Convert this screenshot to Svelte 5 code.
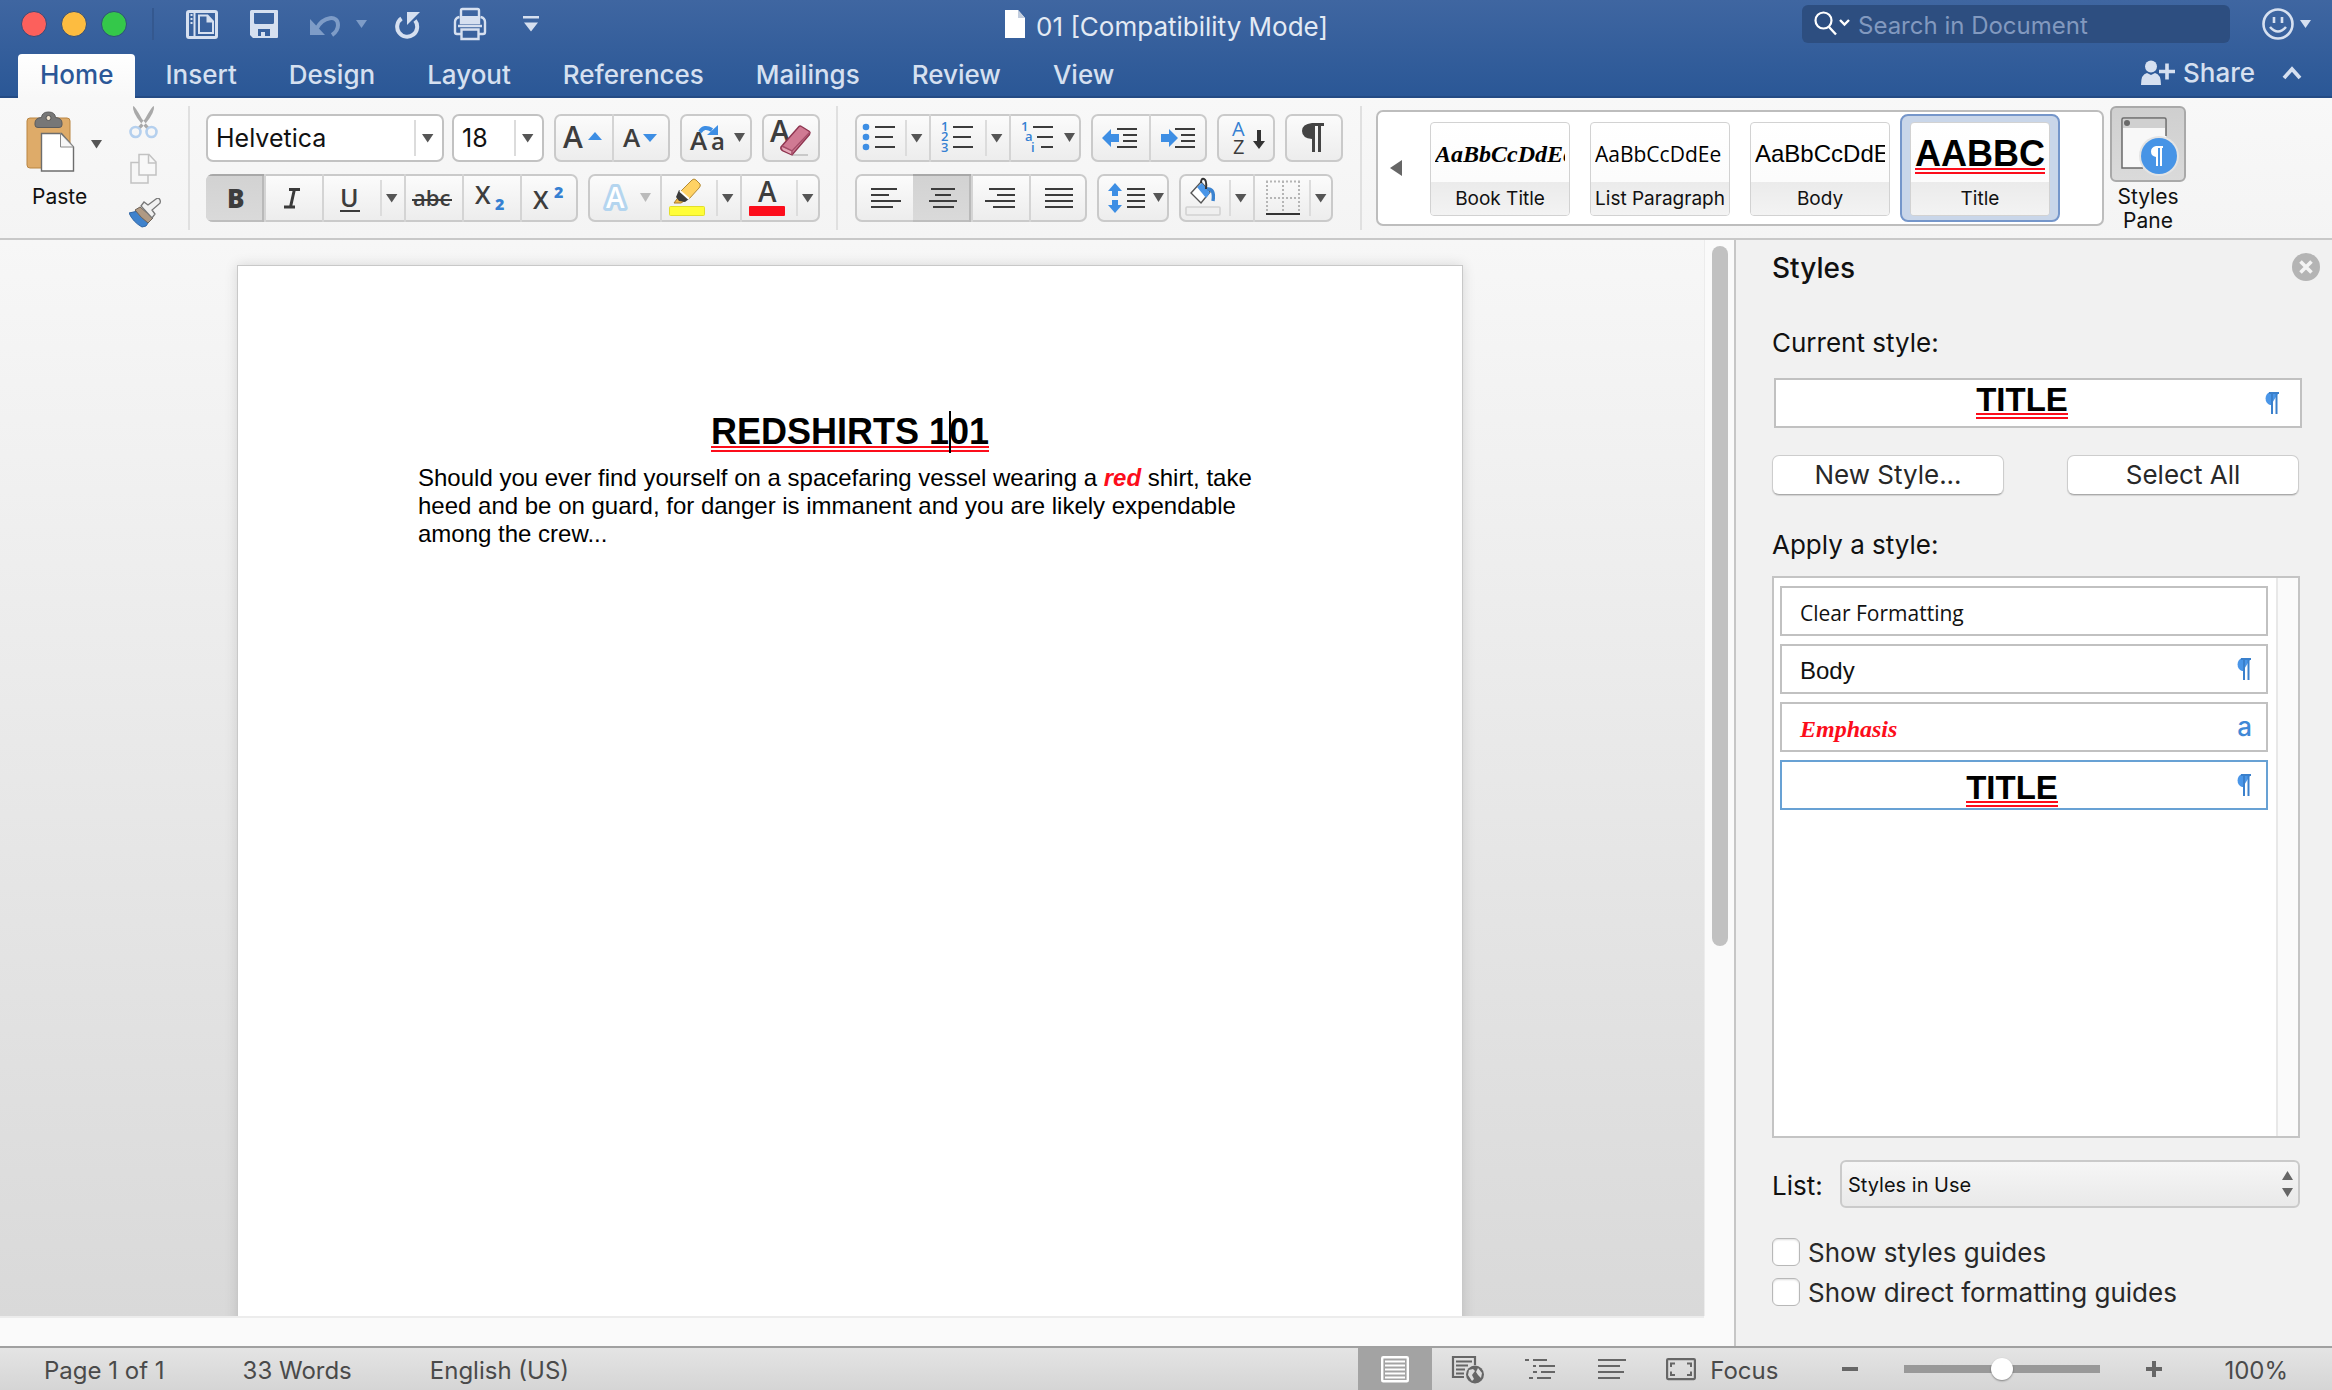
<script>
  const tabs = ['Home', 'Insert', 'Design', 'Layout', 'References', 'Mailings', 'Review', 'View'];
  const gallery = [
    { name: 'Book Title', sample: 'AaBbCcDdEe', look: 'book' },
    { name: 'List Paragraph', sample: 'AaBbCcDdEe', look: 'list' },
    { name: 'Body', sample: 'AaBbCcDdEe', look: 'body' },
    { name: 'Title', sample: 'AABBC', look: 'title' }
  ];
  const styles = [
    { name: 'Clear Formatting', look: 'clear', kind: '' },
    { name: 'Body', look: 'body', kind: 'paragraph' },
    { name: 'Emphasis', look: 'emphasis', kind: 'character' },
    { name: 'TITLE', look: 'title', kind: 'paragraph' }
  ];
  const alignments = [
    { name: 'Align Left', lines: [[16, 42], [16, 34], [16, 46], [16, 38]] },
    { name: 'Center', lines: [[18, 42], [22, 38], [16, 44], [20, 41]] },
    { name: 'Align Right', lines: [[18, 44], [26, 44], [14, 44], [22, 44]] },
    { name: 'Justify', lines: [[16, 44], [16, 44], [16, 44], [16, 44]] }
  ];
  let activeTab = $state('Home');
  let activeStyle = $state('Title');
  let alignment = $state('Center');
  let bold = $state(true);
  let zoom = $state(100);
  let font = $state('Helvetica');
  let size = $state('18');
  let listFilter = $state('Styles in Use');
</script>

{#snippet caret()}
  <svg class="caret" width="12" height="10" viewBox="0 0 12 10" aria-hidden="true"><path d="M0 1h11.4L5.7 9.4z" /></svg>
{/snippet}

{#snippet pilcrow()}
  <svg width="18" height="24" viewBox="0 0 18 24" aria-hidden="true">
    <path d="M17 1H8a7 7 0 0 0 0 13h1z" fill="#4a96e8" />
    <path d="M7 2h10M10 2v21M14.500 2v21" fill="none" stroke="#3a80cc" stroke-width="2" />
  </svg>
{/snippet}

<div class="app">
  <header>
    <div class="titlebar">
      <div class="quick">
        <button class="light red" aria-label="Close"></button>
        <button class="light amber" aria-label="Minimize"></button>
        <button class="light green" aria-label="Zoom"></button>
        <span class="split"></span>
        <button aria-label="New from template">
          <svg width="32" height="32" viewBox="0 0 32 32">
            <rect x="1.500" y="3.500" width="29" height="26" rx="1.500" fill="none" stroke="#d6e0f0" stroke-width="3" />
            <path d="M8.500 3v27" stroke="#d6e0f0" stroke-width="2" />
            <path d="M5.500 6v11" stroke="#d6e0f0" stroke-width="2" stroke-dasharray="2 2" />
            <path d="M13 7.500h8.500l5.500 6V25H13z" fill="none" stroke="#d6e0f0" stroke-width="2" />
            <path d="M20.500 7v7.500H27z" fill="#d6e0f0" />
          </svg>
        </button>
        <button aria-label="Save">
          <svg width="28" height="32" viewBox="0 0 28 32">
            <path fill-rule="evenodd" fill="#d6e0f0" d="M1.500 2H27q1 0 1 1v26q0 1-1 1H3l-3-3V3.500Q0 2 1.500 2zM4 5v9.500q0 1.500 1.500 1.500h17q1.500 0 1.500-1.500V5zM8 21v7h3v-4h4v4h5v-7z" />
          </svg>
        </button>
        <button class="undo" aria-label="Undo">
          <svg width="32" height="32" viewBox="0 0 32 32">
            <path d="M0 11v16h15z" fill="#7e9cc7" />
            <path d="M7 20C13 9 28 6 28 17q0 6-6 10" fill="none" stroke="#7e9cc7" stroke-width="4" />
          </svg>
          <svg width="12" height="10" viewBox="0 0 12 10"><path d="M0 1h11L5.500 9z" fill="#7e9cc7" /></svg>
        </button>
        <button class="repeat" aria-label="Repeat">
          <svg width="26" height="32" viewBox="0 0 26 32">
            <path d="M6.500 10.500A10 10 0 1 0 20 12.500" fill="none" stroke="#d6e0f0" stroke-width="4" />
            <path d="M12 4h13L12 17z" fill="#d6e0f0" />
          </svg>
        </button>
        <button class="print" aria-label="Print">
          <svg width="34" height="34" viewBox="0 0 34 34">
            <path d="M8 16V3.500Q8 2 9.500 2h15Q26 2 26 3.500V16z" fill="none" stroke="#d6e0f0" stroke-width="2.400" />
            <path d="M7 9h20v7H7z" fill="#d6e0f0" />
            <path d="M6.500 10Q2 11 2 15v10q0 2 2 2h4M27.500 10Q32 11 32 15v10q0 2-2 2h-4M5 19h24" fill="none" stroke="#d6e0f0" stroke-width="2.400" />
            <path d="M8.500 22.500h17V32h-17z" fill="none" stroke="#d6e0f0" stroke-width="2.400" />
          </svg>
        </button>
        <button aria-label="Customize toolbar">
          <svg width="16" height="16" viewBox="0 0 16 16"><path d="M0 0h16v2.500H0zM1 6.500h14L8 15.500z" fill="#d6e0f0" /></svg>
        </button>
      </div>
      <div class="docname">
        <svg width="22" height="30" viewBox="0 0 22 30" aria-hidden="true">
          <path d="M1 1h13l7 8v20H1z" fill="#fff" />
          <path d="M14 1v8h7z" fill="#c3cede" />
        </svg>
        <span>01 [Compatibility Mode]</span>
      </div>
      <div class="tools">
        <label class="search">
          <svg width="38" height="28" viewBox="0 0 38 28" aria-hidden="true">
            <circle cx="9.500" cy="10.500" r="8" fill="none" stroke="#fff" stroke-width="2.200" />
            <path d="M15 17l7 7.500M26 10l4.500 4.500L35 10" fill="none" stroke="#fff" stroke-width="2.400" />
          </svg>
          <input type="search" placeholder="Search in Document" aria-label="Search in Document" />
        </label>
        <button class="smile" aria-label="Feedback">
          <svg width="32" height="32" viewBox="0 0 32 32">
            <circle cx="16" cy="16" r="14.500" fill="none" stroke="#d6e0f0" stroke-width="2.600" />
            <path d="M12 9v6M20 9v6" stroke="#d6e0f0" stroke-width="2.600" />
            <path d="M8 19q8 9 16 0" fill="none" stroke="#d6e0f0" stroke-width="2.600" />
          </svg>
          <svg width="12" height="10" viewBox="0 0 12 10"><path d="M0 1h11L5.500 9z" fill="#d6e0f0" /></svg>
        </button>
      </div>
    </div>
    <div class="tabbar">
      <nav>
        {#each tabs as tab}
          <button class="tab" class:active={tab === activeTab} onclick={() => (activeTab = tab)}>{tab}</button>
        {/each}
      </nav>
      <button class="share">
        <svg width="34" height="26" viewBox="0 0 34 26" aria-hidden="true">
          <circle cx="10" cy="6.500" r="6" fill="#d6e0f0" />
          <path d="M0 25q0-11 6-12l4 2 4-2q6 1 6 12z" fill="#d6e0f0" />
          <path d="M18 11.500h16M26 3.500v16" stroke="#d6e0f0" stroke-width="3.600" />
        </svg>
        Share
      </button>
      <button class="collapse" aria-label="Collapse ribbon">
        <svg width="20" height="14" viewBox="0 0 20 14"><path d="M2 12l8-9 8 9" fill="none" stroke="#d6e0f0" stroke-width="3.800" /></svg>
      </button>
    </div>
  </header>

  <section class="ribbon">
    <div class="clipboard">
      <button class="paste">
        <svg width="80" height="64" viewBox="0 0 80 64">
          <rect x="1" y="7" width="43" height="50" rx="3" fill="#deab69" stroke="#b98542" />
          <path d="M15.500 6.500Q16 1 22.500 1T29.500 6.500Q36 7 36 12v2q0 2.500-3 2.500H12Q9 16.500 9 14v-2q0-5 6.500-5.500z" fill="#777" stroke="#5c5c5c" />
          <circle cx="22.500" cy="7" r="2.500" fill="#f0e2cd" stroke="#555" />
          <path d="M15.500 22.500h20L47.500 36v24H15.500z" fill="#fff" stroke="#6d6d6d" stroke-width="1.400" />
          <path d="M34.500 22.500V36h13z" fill="#f7f7f7" stroke="#8a8a8a" />
          <path d="M65 29h11l-5.500 8.500z" fill="#555" />
        </svg>
        <span>Paste</span>
      </button>
      <div class="clips">
        <button aria-label="Cut">
          <svg width="32" height="34" viewBox="0 0 32 34">
            <path d="M4 0Q6 0 13 13l7 8-2.500 2L12 17Q3 6 4 0zM25 0q-2 0-9 13l-7 8 2.500 2L17 17Q26 6 25 0z" fill="#a9a9a9" />
            <circle cx="6.500" cy="26" r="5" fill="none" stroke="#b5d0ee" stroke-width="2.600" />
            <circle cx="22.500" cy="26" r="5" fill="none" stroke="#b5d0ee" stroke-width="2.600" />
          </svg>
        </button>
        <button aria-label="Copy">
          <svg width="32" height="32" viewBox="0 0 32 32">
            <path d="M2 9.500h17V30H2z" fill="#f6f6f6" stroke="#c2c2c2" stroke-width="1.500" />
            <path d="M10 1.500h10l7 7.500v13H10z" fill="#f8f8f8" stroke="#c2c2c2" stroke-width="1.500" />
            <path d="M19.500 2v8H27" fill="none" stroke="#c2c2c2" stroke-width="1.500" />
          </svg>
        </button>
        <button aria-label="Format painter">
          <svg width="32" height="30" viewBox="0 0 32 30">
            <path d="M0 15l9-2 12 9-4 6-4 1Q4 24 0 15z" fill="#3f82cc" stroke="#2f65a5" />
            <path d="M6 12l5-3 13 11-5 5Q12 20 6 12z" fill="#b09a84" stroke="#6e6257" />
            <path d="M12 8l3-4 4 3 8-6q3-2 4 1t-1 4l-7 6 3 4-3 4z" fill="#f1f1f1" stroke="#777" stroke-width="1.300" />
          </svg>
        </button>
      </div>
    </div>

    <span class="rule"></span>

    <div class="rows">
      <div class="row">
        <div class="combos">
          <div class="combo wide">
            <input type="text" aria-label="Font" bind:value={font} />
            <button class="drop" aria-label="Choose font">{@render caret()}</button>
          </div>
          <div class="combo narrow">
            <input type="text" aria-label="Font size" bind:value={size} />
            <button class="drop" aria-label="Choose size">{@render caret()}</button>
          </div>
        </div>
        <div class="group">
          <button class="w58" aria-label="Increase font size">
            <svg width="58" height="48" viewBox="0 0 58 48"><text x="9" y="34" class="g s30">A</text><path class="blue" d="M34 26h14l-7-8z" /></svg>
          </button>
          <button class="w58" aria-label="Decrease font size">
            <svg width="58" height="48" viewBox="0 0 58 48"><text x="11" y="33" class="g s26">A</text><path class="blue" d="M31 20h14l-7 8z" /></svg>
          </button>
        </div>
        <div class="group">
          <button class="w72" aria-label="Change case">
            <svg width="72" height="48" viewBox="0 0 72 48">
              <text x="10" y="36" class="g s26">A</text><text x="31" y="36" class="g s24">a</text>
              <path d="M20 18q4-7 12-2" fill="none" stroke="#3d8ee4" stroke-width="4" /><path class="blue" d="M38 11v10H27z" />
              <path d="M54 19h11l-5.500 9z" fill="#555" />
            </svg>
          </button>
        </div>
        <div class="group">
          <button class="w58" aria-label="Clear formatting">
            <svg width="58" height="48" viewBox="0 0 58 48">
              <text x="8" y="28" class="g s30">A</text>
              <path d="M30 41h16" stroke="#c9c9c9" stroke-width="2" />
              <path d="M37 12.500q1-1 2.500 0l8 5q1 1 0 3L30 41l-9-4q-3-2-2-4z" fill="#d07a93" stroke="#8e3550" stroke-width="1.400" />
              <path d="M20 33l10 4-1 3-8-4z" fill="#e3a9b8" />
              <path d="M20 32l10 5 18-19M30 37v4" fill="none" stroke="#a44d68" stroke-width="1.400" />
            </svg>
          </button>
        </div>
      </div>
      <div class="row">
        <div class="group">
          <button class="w58" class:on={bold} aria-label="Bold" aria-pressed={bold} onclick={() => (bold = !bold)}>
            <svg width="58" height="48" viewBox="0 0 58 48"><text x="21" y="34" class="g s26 heavy">B</text></svg>
          </button>
          <button class="w58" aria-label="Italic">
            <svg width="58" height="48" viewBox="0 0 58 48"><path d="M25 15.500h11M20 33h11M30.500 15l-4 18" fill="none" stroke="#3a3a3a" stroke-width="3" /></svg>
          </button>
          <button class="w58" aria-label="Underline">
            <svg width="58" height="48" viewBox="0 0 58 48"><text x="18" y="33" class="g s25">U</text><path d="M18 37h20" stroke="#3a3a3a" stroke-width="2" /></svg>
          </button>
          <button class="arrow w24" aria-label="Underline styles">{@render caret()}</button>
          <button class="w58" aria-label="Strikethrough">
            <svg width="58" height="48" viewBox="0 0 58 48"><text x="9" y="32" class="g s22">abc</text><path d="M8 26h40" stroke="#3a3a3a" stroke-width="2" /></svg>
          </button>
          <button class="w58" aria-label="Subscript">
            <svg width="58" height="48" viewBox="0 0 58 48"><text x="13" y="30" class="g s25">X</text><text x="33" y="36" class="b s16 heavy">2</text></svg>
          </button>
          <button class="w58" aria-label="Superscript">
            <svg width="58" height="48" viewBox="0 0 58 48"><text x="13" y="35" class="g s25">X</text><text x="34" y="24" class="b s16 heavy">2</text></svg>
          </button>
        </div>
        <div class="group">
          <button class="w72" aria-label="Text effects">
            <svg width="72" height="48" viewBox="0 0 72 48">
              <text x="18" y="34" class="s28 halo">A</text>
              <path d="M52 19h11l-5.500 9z" fill="#bbb" />
            </svg>
          </button>
          <button class="w56" aria-label="Highlight">
            <svg width="56" height="48" viewBox="0 0 56 48">
              <rect x="9.500" y="32.500" width="35" height="9" rx="1" fill="#fffd38" stroke="#e2df2a" />
              <path d="M14 29l6-8 4 6-3 2z" fill="#f0b94a" stroke="#a87b2a" />
              <path d="M19 16l10 9-4 3-6-1-3-4z" fill="#3b3b3b" />
              <path d="M21 17L32 6q2-2 4 0l4 4q1 2-1 4L29 25z" fill="#ffd264" stroke="#b38a35" />
              <path d="M20 17l9 8" stroke="#fff" stroke-width="2" />
            </svg>
          </button>
          <button class="arrow w24" aria-label="Highlight colors">{@render caret()}</button>
          <button class="w56" aria-label="Font color">
            <svg width="56" height="48" viewBox="0 0 56 48"><text x="18" y="28" class="g s28">A</text><rect x="9" y="32" width="36" height="10" rx="1" fill="#fc0d1b" /></svg>
          </button>
          <button class="arrow w24" aria-label="Font colors">{@render caret()}</button>
        </div>
      </div>
    </div>

    <span class="rule"></span>

    <div class="rows">
      <div class="row">
        <div class="group">
          <button class="w50" aria-label="Bullets">
            <svg width="50" height="48" viewBox="0 0 50 48">
              <g class="blue"><circle cx="11" cy="13" r="3.300" /><circle cx="11" cy="23" r="3.300" /><circle cx="11" cy="33" r="3.300" /></g>
              <path class="ln" d="M20 13h20M20 23h18M20 33h20" />
            </svg>
          </button>
          <button class="arrow w24" aria-label="Bullet styles">{@render caret()}</button>
          <button class="w56" aria-label="Numbering">
            <svg width="56" height="48" viewBox="0 0 56 48">
              <text x="12" y="17" class="b s12">1</text><text x="12" y="27" class="b s12">2</text><text x="12" y="38" class="b s12">3</text>
              <path class="ln" d="M24 13h20M24 23h18M24 33h20" />
            </svg>
          </button>
          <button class="arrow w24" aria-label="Number styles">{@render caret()}</button>
          <button class="w72" aria-label="Multilevel list">
            <svg width="72" height="48" viewBox="0 0 72 48">
              <text x="12" y="17" class="b s12">1</text><text x="16" y="27" class="b s12">a</text><text x="22" y="38" class="b s12">i</text>
              <path class="ln" d="M24 13h20M28 23h16M32 33h12" />
              <path d="M55 19h11l-5.500 9z" fill="#555" />
            </svg>
          </button>
        </div>
        <div class="group">
          <button class="w58" aria-label="Decrease indent">
            <svg width="58" height="48" viewBox="0 0 58 48"><path class="blue" d="M11 24l9-9v5h8v8h-8v5z" /><path class="ln" d="M26 15h20M32 21h14M32 27h14M26 33h20" /></svg>
          </button>
          <button class="w58" aria-label="Increase indent">
            <svg width="58" height="48" viewBox="0 0 58 48"><path class="blue" d="M29 24l-9-9v5h-8v8h8v5z" /><path class="ln" d="M26 15h20M32 21h14M32 27h14M26 33h20" /></svg>
          </button>
        </div>
        <div class="group">
          <button class="w58" aria-label="Sort">
            <svg width="58" height="48" viewBox="0 0 58 48"><text x="15" y="22" class="b s20 light-type">A</text><text x="16" y="40" class="g s20 light-type">Z</text><path d="M40 16h4v11h4l-6 8-6-8h4z" fill="#333" /></svg>
          </button>
        </div>
        <div class="group">
          <button class="w58" aria-label="Show paragraph marks">
            <svg width="58" height="48" viewBox="0 0 58 48"><path d="M39 9v3h-3v26h-3V12h-3v26h-3V25q-10-1-10-8t10-8z" fill="#444" /></svg>
          </button>
        </div>
      </div>
      <div class="row">
        <div class="group">
          {#each alignments as a}
            <button class="w58" class:on={a.name === alignment} aria-label={a.name} aria-pressed={a.name === alignment} onclick={() => (alignment = a.name)}>
              <svg width="58" height="48" viewBox="0 0 58 48">
                {#each a.lines as [from, to], i}<path class="ln" d="M{from} {15 + i * 6}H{to}" />{/each}
              </svg>
            </button>
          {/each}
        </div>
        <div class="group">
          <button class="w72" aria-label="Line spacing">
            <svg width="72" height="48" viewBox="0 0 72 48">
              <path class="blue" d="M18 9l7 8h-4v5h-6v-5h-4zM18 39l7-8h-4v-5h-6v5h-4z" />
              <path class="ln" d="M30 15h18M30 21h18M30 27h18M30 33h18" />
              <path d="M56 19h11l-5.500 9z" fill="#555" />
            </svg>
          </button>
        </div>
        <div class="group">
          <button class="w50" aria-label="Shading">
            <svg width="50" height="48" viewBox="0 0 50 48">
              <rect x="7" y="33" width="34" height="8" rx="1" fill="#efefef" stroke="#d2d2d2" stroke-width="1.600" />
              <path d="M22 8l9 10-9 11-10-10z" fill="#fff" stroke="#555" stroke-width="1.400" />
              <path d="M18 13l9 11 4-5-8-10z" fill="#4a96e8" />
              <path d="M28 15q8-1 6 12" fill="none" stroke="#3b83d0" stroke-width="3.400" />
              <path d="M22 9q0-5 3-4t2 10" fill="none" stroke="#333" stroke-width="2" />
            </svg>
          </button>
          <button class="arrow w24" aria-label="Shading colors">{@render caret()}</button>
          <button class="w56" aria-label="Borders">
            <svg width="56" height="48" viewBox="0 0 56 48">
              <path d="M13 7.500h34M13 24h34M14 7v32M30 7v32M46 7v32" fill="none" stroke="#b5b5b5" stroke-width="2" stroke-dasharray="2 2" />
              <path d="M13 40h34" stroke="#333" stroke-width="2" />
            </svg>
          </button>
          <button class="arrow w24" aria-label="Border styles">{@render caret()}</button>
        </div>
      </div>
    </div>

    <span class="rule"></span>

    <div class="gallery">
      <button class="prev" aria-label="Previous styles"><svg width="12" height="16" viewBox="0 0 12 16"><path d="M12 0v16L0 8z" fill="#666" /></svg></button>
      {#each gallery as g}
        <button class="card" class:chosen={g.name === activeStyle} onclick={() => (activeStyle = g.name)}>
          <span class="face">
            <span class="sample"><span class={g.look}>{g.sample}</span></span>
            <span class="caption">{g.name}</span>
          </span>
        </button>
      {/each}
    </div>

    <button class="pane-toggle" aria-pressed="true">
      <span class="pane-icon">
        <svg width="60" height="60" viewBox="0 0 60 60">
          <path d="M2 3.500Q2 2 3.500 2h41Q46 2 46 3.500V52H2z" fill="#f8f8f8" />
          <path d="M3 3h42v9H3z" fill="#d0d0d0" />
          <path d="M46 20V3.500Q46 2 44.500 2h-41Q2 2 2 3.500V52h21" fill="none" stroke="#6a6a6a" stroke-width="1.500" />
          <circle cx="7" cy="7" r="3" fill="#6a6a6a" />
          <path d="M47 20V53H23z" fill="#d6d6d6" />
          <circle cx="39" cy="40" r="20" fill="#e4e4e4" />
          <circle cx="39" cy="40" r="18" fill="#4794e6" />
          <path d="M43 30v2h-1v18h-2V32h-2v18h-2v-9q-5-1-5-5.500t5-5.500z" fill="#fff" />
        </svg>
      </span>
      Styles<br />Pane
    </button>
  </section>

  <main>
    <div class="workspace">
      <div class="canvas">
        <article>
          <h1>REDSHIRTS 1<span class="cursor"></span>01</h1>
          <p>Should you ever find yourself on a spacefaring vessel wearing a <em>red</em> shirt, take heed and be on guard, for danger is immanent and you are likely expendable among the crew...</p>
        </article>
      </div>
      <div class="vscroll"><span></span></div>
      <div class="hscroll"></div>
    </div>

    <aside>
      <div class="heading">
        <h2>Styles</h2>
        <button aria-label="Close styles pane">
          <svg width="28" height="28" viewBox="0 0 28 28"><circle cx="14" cy="14" r="14" fill="#b4b4b4" /><path d="M8.500 8.500l11 11M19.500 8.500l-11 11" stroke="#f4f4f4" stroke-width="3.600" /></svg>
        </button>
      </div>
      <h3>Current style:</h3>
      <div class="current">
        <span class="title">TITLE</span>
        <i class="kind">{@render pilcrow()}</i>
      </div>
      <div class="actions">
        <button>New Style...</button>
        <button>Select All</button>
      </div>
      <h3 class="apply">Apply a style:</h3>
      <div class="stylelist">
        <div class="entries">
          {#each styles as s}
            <button class="entry" class:centered={s.look === 'title'} class:selected={s.look === 'title'}>
              <span class={s.look}>{s.name}</span>
              {#if s.kind === 'paragraph'}<i class="kind">{@render pilcrow()}</i>{/if}
              {#if s.kind === 'character'}<i class="kind">a</i>{/if}
            </button>
          {/each}
        </div>
        <div class="track"></div>
      </div>
      <div class="filter">
        <label for="filter">List:</label>
        <div class="select">
          <select id="filter" bind:value={listFilter}>
            <option>Styles in Use</option>
            <option>Recommended</option>
            <option>All Styles</option>
          </select>
          <svg width="12" height="26" viewBox="0 0 12 26" aria-hidden="true"><path d="M0 9h11L5.500 0zM0 17h11l-5.500 9z" fill="#666" /></svg>
        </div>
      </div>
      <label class="check first"><input type="checkbox" /><span>Show styles guides</span></label>
      <label class="check"><input type="checkbox" /><span>Show direct formatting guides</span></label>
    </aside>
  </main>

  <footer>
    <span class="page">Page 1 of 1</span>
    <span class="words">33 Words</span>
    <span class="language">English (US)</span>
    <div class="views">
      <button class="view on" aria-label="Print layout">
        <svg width="28" height="28" viewBox="0 0 28 28"><rect x="1.200" y="2.200" width="25.600" height="24" rx="1" fill="none" stroke="#fff" stroke-width="2.400" /><path d="M4 6.500h20M4 10.500h20M4 14.500h20M4 18.500h20M4 22.500h20" stroke="#fff" stroke-width="2" /></svg>
      </button>
      <button class="view" aria-label="Web layout">
        <svg width="34" height="30" viewBox="0 0 34 30">
          <path d="M13 23H2V3h22v8" fill="none" stroke="#666" stroke-width="2.200" />
          <path d="M5 7.500h16M5 11.500h12M5 15.500h9M5 19.500h8" stroke="#666" stroke-width="2" />
          <circle cx="24" cy="20.500" r="9" fill="#666" />
          <path d="M18 16l4-1 2 2-3 4 2 4-2 2-4-6zM27 14l4 5-1 5-3-3-2-3z" fill="#dcdcdc" />
        </svg>
      </button>
      <button class="view" aria-label="Outline">
        <svg width="30" height="22" viewBox="0 0 30 22"><path d="M0 2h4M8 2h14M8 8h3M14 8h16M8 14h4M16 14h14M4 20h4M12 20h14" stroke="#666" stroke-width="2" /></svg>
      </button>
      <button class="view" aria-label="Draft">
        <svg width="28" height="22" viewBox="0 0 28 22"><path d="M0 2h28M0 8h22M0 14h26M0 20h22" stroke="#666" stroke-width="2" /></svg>
      </button>
      <button class="focus">
        <svg width="30" height="24" viewBox="0 0 30 24" aria-hidden="true"><rect x="1.100" y="2.100" width="27.800" height="20" rx="1" fill="none" stroke="#666" stroke-width="2.200" /><path d="M5 10V6.500h4M21 6.500h4V10M5 14.500V18h4M21 18h4v-3.500" fill="none" stroke="#666" stroke-width="2" /></svg>
        <span>Focus</span>
      </button>
      <button class="step" aria-label="Zoom out"><svg width="16" height="16" viewBox="0 0 16 16"><path d="M0 8h16" stroke="#666" stroke-width="4" /></svg></button>
      <input class="slider" type="range" min="0" max="200" bind:value={zoom} aria-label="Zoom level" />
      <button class="step" aria-label="Zoom in"><svg width="16" height="16" viewBox="0 0 16 16"><path d="M0 8h16M8 0v16" stroke="#666" stroke-width="4" /></svg></button>
      <output>{zoom}%</output>
    </div>
  </footer>
</div>

<style>
  :global(body) {
    margin: 0;
  }
  .app {
    display: flex;
    flex-direction: column;
    height: 100vh;
    overflow: hidden;
    font: 400 26px/32px Inter, "Liberation Sans", sans-serif;
    color: #111;
  }
  .app *,
  .app *::before {
    box-sizing: border-box;
  }
  svg {
    display: block;
    flex: none;
  }
  button {
    margin: 0;
    padding: 0;
    border: 0;
    background: none;
    color: inherit;
    font: inherit;
  }
  input,
  select {
    font: inherit;
    color: inherit;
    margin: 0;
  }

  /* Title bar and tabs */
  header {
    background: linear-gradient(#3f66a1, #2a5796);
    color: #d6e0f0;
    box-shadow: inset 0 -2px #244b84;
  }
  .titlebar {
    display: grid;
    grid-template-columns: 1fr auto 1fr;
    align-items: center;
    height: 48px;
  }
  .quick {
    display: flex;
    align-items: center;
    padding-left: 21px;
  }
  .light {
    width: 26px;
    height: 26px;
    margin-right: 14px;
    border: 1px solid #2f4d7c;
    border-radius: 50%;
  }
  .red { background: #fc605c; }
  .amber { background: #fdbc40; }
  .green { background: #34c84a; }
  .split {
    width: 2px;
    height: 32px;
    margin: 0 32px 0 11px;
    background: #34588f;
  }
  .quick button:not(.light) {
    display: flex;
    align-items: center;
    gap: 14px;
    margin-right: 32px;
  }
  .quick button.undo {
    margin-right: 27px;
  }
  .quick button.print {
    margin-right: 36px;
  }
  .docname {
    display: flex;
    align-items: center;
    gap: 10px;
    color: #e3eaf4;
  }
  .docname span {
    padding-top: 5px;
  }
  .tools {
    display: flex;
    align-items: center;
    justify-content: flex-end;
    gap: 32px;
    padding-right: 20px;
  }
  .search {
    display: flex;
    align-items: center;
    gap: 6px;
    width: 428px;
    height: 38px;
    padding: 0 12px;
    border-radius: 6px;
    background: #2d4e80;
  }
  .search input {
    flex: 1;
    min-width: 0;
    padding: 4px 0 0;
    border: 0;
    outline: 0;
    background: none;
    appearance: none;
    font-size: 24px;
  }
  .search input::placeholder {
    color: #8299bf;
  }
  .smile {
    display: flex;
    align-items: center;
    gap: 6px;
  }
  .tabbar {
    display: flex;
    align-items: center;
    height: 50px;
    padding: 0 30px 0 18px;
    font-weight: 500;
  }
  nav {
    display: flex;
    align-items: flex-end;
    align-self: flex-end;
    gap: 8px;
    flex: 1;
  }
  .tab {
    height: 44px;
    padding: 0 22px 3px;
    border-radius: 4px 4px 0 0;
  }
  .tab.active {
    background: linear-gradient(#fff, #f8f8f8);
    color: #2b5797;
  }
  .share {
    display: flex;
    align-items: center;
    gap: 8px;
    margin-right: 27px;
  }

  /* Ribbon */
  .ribbon {
    display: flex;
    height: 142px;
    padding: 8px 0 8px 20px;
    border-bottom: 2px solid #c8c8c8;
    background: linear-gradient(#f8f8f8, #f4f4f4);
    font-size: 21px;
    line-height: 24px;
  }
  .clipboard {
    display: flex;
    gap: 16px;
  }
  .paste {
    display: flex;
    flex-direction: column;
    align-items: flex-start;
    width: 92px;
    padding: 5px 0 0 6px;
    gap: 10px;
  }
  .paste span {
    padding-left: 6px;
  }
  .clips {
    display: flex;
    flex-direction: column;
    gap: 13px;
    width: 34px;
    padding-left: 1px;
  }
  .clips button {
    display: block;
  }
  .rule {
    flex: none;
    width: 2px;
    height: 124px;
    margin: 0 16px;
    background: #e0e0e0;
  }
  .clipboard + .rule {
    margin-left: 26px;
  }
  .rows {
    display: flex;
    flex: none;
    flex-direction: column;
    gap: 12px;
    padding-top: 8px;
  }
  .rows + .rule + .rows {
    padding: 8px 1px 0;
  }
  .row {
    display: flex;
    gap: 10px;
    height: 48px;
  }
  .combos {
    display: flex;
    gap: 8px;
  }
  .combo {
    display: flex;
    border: 2px solid #c2c2c2;
    border-radius: 7px;
    background: #fff;
    font-size: 25px;
  }
  .wide { width: 238px; }
  .narrow { width: 92px; }
  .combo input {
    flex: 1;
    min-width: 0;
    padding: 0 0 1px 8px;
    border: 0;
    outline: 0;
    background: none;
  }
  .drop,
  .arrow {
    display: flex;
    flex: none;
    align-items: center;
    justify-content: center;
    background: linear-gradient(#dcdcdc, #dcdcdc) left center / 2px 36px no-repeat;
  }
  .drop { width: 28px; }
  .caret { fill: #555; }
  .group {
    display: flex;
    overflow: hidden;
    border-radius: 7px;
    background: linear-gradient(#fcfcfc, #ececec);
    box-shadow: inset 0 0 0 2px #cacaca;
  }
  .group button + button:not(.arrow) {
    box-shadow: inset 2px 0 #d4d4d4;
  }
  .group .on,
  .group button + .on:not(.arrow) {
    background: linear-gradient(#d2d2d2, #dadada);
    box-shadow: inset 0 2px #a8a8a8, inset -2px 0 #b9b9b9, inset 0 -2px #bdbdbd;
  }
  .w24 { width: 24px; }
  .w50 { width: 50px; }
  .w56 { width: 56px; }
  .w58 { width: 58px; }
  .w72 { width: 72px; }
  text {
    font-family: "Open Sans", "Noto Sans", sans-serif;
    font-weight: 600;
  }
  .g { fill: #3d3d3d; }
  .b { fill: #3580d2; }
  .blue { fill: #3d8ee4; }
  .ln {
    fill: none;
    stroke: #3c3c3c;
    stroke-width: 2;
  }
  .heavy { font-weight: 800; }
  .light-type { font-weight: 400; }
  .halo {
    fill: #fff;
    stroke: #b4d5ef;
    stroke-width: 6;
    stroke-linejoin: round;
    paint-order: stroke;
  }
  .s12 { font-size: 13px; }
  .s16 { font-size: 16px; }
  .s20 { font-size: 20px; }
  .s22 { font-size: 22px; }
  .s24 { font-size: 24px; }
  .s25 { font-size: 25px; }
  .s26 { font-size: 26px; }
  .s28 { font-size: 28px; }
  .s30 { font-size: 30px; }

  .gallery {
    display: flex;
    flex: 0 1 728px;
    height: 116px;
    margin: 4px 0 0 -2px;
    border: 2px solid #bdbdbd;
    border-radius: 7px;
    background: #fff;
    font-size: 19px;
    overflow: hidden;
  }
  .prev {
    display: flex;
    align-items: center;
    justify-content: center;
    width: 42px;
    padding-right: 6px;
  }
  .card {
    flex: none;
    width: 160px;
    height: 108px;
    margin-top: 2px;
    padding: 6px 8px;
    border: 2px solid transparent;
    border-radius: 8px;
  }
  .card.chosen {
    border-color: #7596ca;
    background: #c9d6e9;
  }
  .face {
    display: flex;
    flex-direction: column;
    height: 94px;
    border: 1px solid #d2d2d2;
    border-radius: 4px;
    background: linear-gradient(#fff, #fafafa);
    overflow: hidden;
  }
  .sample {
    display: flex;
    align-items: center;
    height: 62px;
    margin: 0 4px;
    padding-top: 3px;
    overflow: hidden;
    color: #000;
  }
  .caption {
    flex: 1;
    padding-top: 1px;
    line-height: 32px;
    background: linear-gradient(#ebebeb, #f3f3f3);
    text-align: center;
    white-space: nowrap;
  }
  .book {
    font: italic 700 24px/28px "Liberation Serif", serif;
  }
  .list,
  .clear {
    font: 400 21px/28px "Open Sans", sans-serif;
  }
  .body {
    font: 400 24px/28px "Liberation Sans", sans-serif;
  }
  .emphasis {
    color: #fc0d1b;
    font: italic 700 24px/28px "Liberation Serif", serif;
  }
  .title {
    border-bottom: 6px double #fc0d1b;
    color: #000;
    font: 700 33px/27px "Liberation Sans", sans-serif;
  }
  .sample .title {
    margin-top: 4px;
    font-size: 36px;
    line-height: 29px;
  }
  .pane-toggle {
    display: flex;
    flex-direction: column;
    align-items: center;
    margin-left: 6px;
  }
  .pane-icon {
    flex: none;
    width: 76px;
    height: 76px;
    margin-bottom: 3px;
    padding: 8px;
    border: 2px solid #a9a9a9;
    border-radius: 6px;
    background: linear-gradient(#cfcfcf, #dadada);
  }

  /* Document */
  main {
    display: flex;
    flex: 1;
    min-height: 0;
  }
  .workspace {
    display: grid;
    flex: 1;
    grid-template: minmax(0, 1fr) 30px / minmax(0, 1fr) 30px;
    background: #fafafa;
  }
  .canvas {
    display: flex;
    justify-content: center;
    overflow: hidden;
    padding: 25px 4px 0 0;
    background: linear-gradient(#f7f7f7, #d9d9d9);
  }
  article {
    width: 1226px;
    height: 1600px;
    padding: 151px 180px;
    border: 1px solid #c8c8c8;
    background: #fff;
    box-shadow: 0 0 12px #0002;
    color: #000;
    font: 400 24px/28px "Liberation Sans", sans-serif;
  }
  h1 {
    width: fit-content;
    margin: 0 auto 12px;
    border-bottom: 6px double #fc0d1b;
    font: 700 36px/29px "Liberation Sans", sans-serif;
  }
  .cursor {
    position: relative;
  }
  .cursor::before {
    content: "";
    position: absolute;
    top: 0;
    left: 0;
    width: 2px;
    height: 42px;
    background: #000;
  }
  p {
    margin: 0;
  }
  em {
    color: #fc0d1b;
    font-weight: 700;
  }
  .vscroll {
    padding: 6px 7px 0;
    border-left: 1px solid #ececec;
  }
  .vscroll span {
    display: block;
    width: 16px;
    height: calc(65% + 4px);
    border-radius: 8px;
    background: #c1c1c1;
  }
  .hscroll {
    border-top: 2px solid #ececec;
  }

  /* Styles pane */
  aside {
    display: flex;
    flex-direction: column;
    width: 598px;
    padding: 9px 32px 40px 36px;
    border-left: 2px solid #c6c6c6;
    background: #f1f1f1;
  }
  .heading {
    display: flex;
    align-items: center;
    justify-content: space-between;
    margin: 0 -20px 42px 0;
    height: 36px;
  }
  h2 {
    margin: 0;
    padding-top: 2px;
    font-size: 28px;
    font-weight: 500;
  }
  h3 {
    margin: 0;
    font-size: 26px;
    font-weight: 400;
  }
  .current,
  .entry {
    position: relative;
    display: flex;
    align-items: center;
    height: 50px;
    border: 2px solid #c1c1c1;
    background: #fff;
  }
  .current {
    justify-content: center;
    margin: 19px -2px 27px 2px;
    padding: 0 32px 2px 0;
  }
  .kind {
    position: absolute;
    right: 20px;
    top: 11px;
    color: #4088d6;
    font: 500 26px/24px Inter, sans-serif;
  }
  .entry .kind {
    right: 14px;
  }
  .actions {
    display: flex;
    justify-content: space-between;
    margin-right: 1px;
  }
  .actions button {
    width: 232px;
    height: 40px;
    border: 1px solid #cdcdcd;
    border-bottom-color: #aaa;
    border-radius: 7px;
    background: #fff;
    box-shadow: 0 1px 1px #0002;
    color: #282828;
  }
  .apply {
    margin: 34px 0 15px;
  }
  .stylelist {
    display: flex;
    flex: 1;
    min-height: 0;
    border: 2px solid #c4c4c4;
    background: #fff;
  }
  .entries {
    display: flex;
    flex: 1;
    flex-direction: column;
    gap: 8px;
    padding: 8px 8px 8px 6px;
  }
  .entry {
    padding: 4px 0 0 18px;
  }
  .entry.centered {
    justify-content: center;
    padding: 10px 24px 0 0;
  }
  .entry.selected {
    border-color: #68a1d4;
  }
  .track {
    width: 22px;
    border-left: 2px solid #e8e8e8;
    background: #fafafa;
  }
  .filter {
    display: flex;
    align-items: center;
    justify-content: space-between;
    margin: 22px 0 30px;
  }
  .filter label {
    padding-top: 3px;
  }
  .select {
    display: grid;
    width: 460px;
    height: 48px;
  }
  .select > :global(*) {
    grid-area: 1 / 1;
  }
  select {
    appearance: none;
    padding: 2px 40px 0 6px;
    border: 2px solid #cacaca;
    border-radius: 6px;
    background: linear-gradient(#f6f6f6, #e9e9e9);
    font-size: 20px;
  }
  .select svg {
    align-self: center;
    justify-self: end;
    margin-right: 6px;
    pointer-events: none;
  }
  .check {
    display: flex;
    align-items: center;
    gap: 8px;
    height: 28px;
    color: #282828;
  }
  .check span {
    padding-top: 2px;
  }
  .first {
    margin-bottom: 12px;
  }
  .check input {
    appearance: none;
    width: 28px;
    height: 28px;
    border: 1px solid #b8b8b8;
    border-radius: 6px;
    background: #fff;
    box-shadow: inset 0 1px 2px #0002;
  }

  /* Status bar */
  footer {
    display: flex;
    align-items: center;
    height: 44px;
    padding: 0 44px;
    border-top: 2px solid #a0a0a0;
    background: linear-gradient(#e4e4e4, #d5d5d5);
    color: #4a4a4a;
    font-size: 24px;
  }
  .page,
  .words {
    margin-right: 78px;
  }
  .page,
  .words,
  .language,
  .focus span,
  output {
    padding-top: 3px;
  }
  .views {
    display: flex;
    align-items: center;
    align-self: stretch;
    margin-left: auto;
  }
  .view {
    display: flex;
    align-items: center;
    align-self: stretch;
    justify-content: center;
    width: 72px;
  }
  .view.on {
    width: 74px;
    background: #a3a3a3;
  }
  .focus {
    display: flex;
    align-items: center;
    gap: 14px;
    margin: 0 56px 0 18px;
  }
  .step {
    display: flex;
    justify-content: center;
    width: 32px;
  }
  .slider {
    appearance: none;
    width: 196px;
    height: 24px;
    margin: 0 38px;
    background: linear-gradient(#999, #999) center / 100% 8px no-repeat;
  }
  .slider::-webkit-slider-thumb {
    appearance: none;
    width: 22px;
    height: 22px;
    border-radius: 50%;
    background: #fff;
    box-shadow: 0 1px 2px #0006;
  }
  output {
    margin-left: 54px;
  }
</style>
